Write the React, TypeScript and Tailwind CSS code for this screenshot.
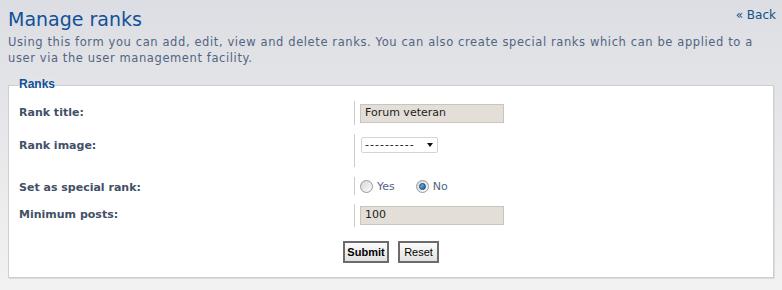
import React from 'react';

const Radio = ({ checked }: { checked?: boolean }) => (
    <span className="relative inline-flex h-[13px] w-[13px] items-center justify-center rounded-full border border-[#9a9a9a] bg-gradient-to-br from-[#d8d8d8] to-[#fbfbfb]">
        {checked && (
            <span className="h-[7px] w-[7px] rounded-full border border-[#16456f] bg-gradient-to-br from-[#6fc0f3] to-[#1c5fa3]" />
        )}
    </span>
);

export default function App() {
    return (
        <div
            className="h-[290px] w-full bg-gradient-to-b from-[#dcdee3] to-[#f2f2f2] px-[8px] text-[11px]"
            style={{ fontFamily: '"DejaVu Sans", Verdana, sans-serif' }}
        >
            <div className="flex items-start justify-between pt-[7px]">
                <h1 className="text-[19px] leading-[24px] text-[#115098]">Manage ranks</h1>
                <a href="#" className="mr-[-2px] text-[12px] leading-[16px] text-[#105289]">« Back</a>
            </div>
            <p className="mt-[3px] text-[11.5px] leading-[16px] tracking-[0.6px] text-[#536482]">
                Using this form you can add, edit, view and delete ranks. You can also create special ranks which can be applied to a user via the user management facility.
            </p>

            <div className="mt-[19px] border border-[#cfcfcf] bg-white px-[10px] pb-[14px] shadow-[1px_1px_0_#dcdcdc]">
                <div
                    className="-mt-[9px] w-fit bg-[linear-gradient(to_bottom,#e2e4e7_8px,#ffffff_8px)] text-[12px] leading-[14px] font-bold text-[#115098]"
                    style={{ fontFamily: '"Liberation Sans", Arial, sans-serif' }}
                >
                    Ranks
                </div>

                <dl className="mt-[10px] flex">
                    <dt className="h-[24px] w-[335px] pt-[5px] leading-[14px] font-bold text-[#425067]">Rank title:</dt>
                    <dd className="h-[24px] border-l border-[#cccccc] pt-[3px] pl-[5px]">
                        <div className="flex h-[19px] w-[144px] items-center border border-[#c9c5bd] bg-[#e3dfd8] px-[4px] text-[#222]">
                            Forum veteran
                        </div>
                    </dd>
                </dl>

                <dl className="mt-[9px] flex">
                    <dt className="h-[33px] w-[335px] pt-[5px] leading-[14px] font-bold text-[#425067]">Rank image:</dt>
                    <dd className="h-[33px] border-l border-[#cccccc] pt-[3px] pl-[6px]">
                        <div className="flex h-[16px] w-[77px] items-center justify-between rounded-[2px] border border-[#d4d4d4] bg-white pr-[4px] pl-[3px] text-[#111]">
                            <span className="tracking-[1px]">----------</span>
                            <span className="h-0 w-0 border-x-[3px] border-t-[4px] border-x-transparent border-t-[#111]" />
                        </div>
                    </dd>
                </dl>

                <dl className="mt-[10px] flex">
                    <dt className="h-[18px] w-[335px] pt-[4px] leading-[14px] font-bold text-[#425067]">Set as special rank:</dt>
                    <dd className="flex h-[18px] items-start border-l border-[#cccccc] pt-[3px] pl-[5px] text-[#536482]">
                        <label className="flex items-center gap-[4px]">
                            <Radio />
                            <span className="leading-[13px]">Yes</span>
                        </label>
                        <label className="ml-[21px] flex items-center gap-[4px]">
                            <Radio checked />
                            <span className="leading-[13px]">No</span>
                        </label>
                    </dd>
                </dl>

                <dl className="mt-[9px] flex">
                    <dt className="h-[23px] w-[335px] pt-[4px] leading-[14px] font-bold text-[#425067]">Minimum posts:</dt>
                    <dd className="h-[23px] border-l border-[#cccccc] pt-[2px] pl-[5px]">
                        <div className="flex h-[19px] w-[144px] items-center border border-[#c9c5bd] bg-[#e3dfd8] px-[4px] text-[#222]">
                            100
                        </div>
                    </dd>
                </dl>

                <div
                    className="mt-[14px] flex justify-center gap-[9px] text-[11px] text-black"
                    style={{ fontFamily: '"Liberation Sans", Arial, sans-serif' }}
                >
                    <button className="h-[22px] w-[46px] border-2 border-[#6b6b6b] bg-gradient-to-b from-[#fbfbfb] to-[#e2e2e2] font-bold">
                        Submit
                    </button>
                    <button className="h-[22px] w-[41px] border-2 border-[#6b6b6b] bg-gradient-to-b from-[#fbfbfb] to-[#e2e2e2]">
                        Reset
                    </button>
                </div>
            </div>
        </div>
    );
}
